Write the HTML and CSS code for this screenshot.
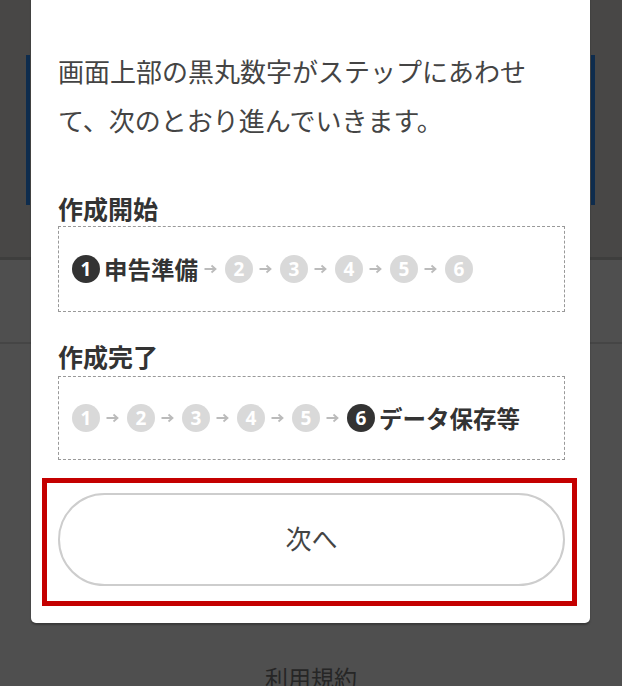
FILE: index.html
```html
<!DOCTYPE html>
<html lang="ja">
<head>
<meta charset="utf-8">
<title>作成の流れ</title>
<link rel="stylesheet" href="styles.css">
</head>
<body>
<div class="page">
  <header class="bg-top"><div class="navy-box"></div></header>
  <section class="bg-mid"></section>
  <footer class="bg-foot"><a class="terms">利用規約</a></footer>
</div>

<div class="modal" role="dialog">
  <p class="lead">画面上部の黒丸数字がステップにあわせて、次のとおり進んでいきます。</p>

  <h2 class="step-title">作成開始</h2>
  <div class="step-box">
    <ol class="steps">
      <li class="num on">1</li><li class="label">申告準備</li>
      <li class="arrow"><svg viewBox="0 0 13 10" width="13" height="10"><path d="M0.5 5H11.5M7.5 1.5L11.5 5L7.5 8.5" /></svg></li>
      <li class="num">2</li>
      <li class="arrow"><svg viewBox="0 0 13 10" width="13" height="10"><path d="M0.5 5H11.5M7.5 1.5L11.5 5L7.5 8.5" /></svg></li>
      <li class="num">3</li>
      <li class="arrow"><svg viewBox="0 0 13 10" width="13" height="10"><path d="M0.5 5H11.5M7.5 1.5L11.5 5L7.5 8.5" /></svg></li>
      <li class="num">4</li>
      <li class="arrow"><svg viewBox="0 0 13 10" width="13" height="10"><path d="M0.5 5H11.5M7.5 1.5L11.5 5L7.5 8.5" /></svg></li>
      <li class="num">5</li>
      <li class="arrow"><svg viewBox="0 0 13 10" width="13" height="10"><path d="M0.5 5H11.5M7.5 1.5L11.5 5L7.5 8.5" /></svg></li>
      <li class="num">6</li>
    </ol>
  </div>

  <h2 class="step-title second">作成完了</h2>
  <div class="step-box end">
    <ol class="steps">
      <li class="num">1</li>
      <li class="arrow"><svg viewBox="0 0 13 10" width="13" height="10"><path d="M0.5 5H11.5M7.5 1.5L11.5 5L7.5 8.5" /></svg></li>
      <li class="num">2</li>
      <li class="arrow"><svg viewBox="0 0 13 10" width="13" height="10"><path d="M0.5 5H11.5M7.5 1.5L11.5 5L7.5 8.5" /></svg></li>
      <li class="num">3</li>
      <li class="arrow"><svg viewBox="0 0 13 10" width="13" height="10"><path d="M0.5 5H11.5M7.5 1.5L11.5 5L7.5 8.5" /></svg></li>
      <li class="num">4</li>
      <li class="arrow"><svg viewBox="0 0 13 10" width="13" height="10"><path d="M0.5 5H11.5M7.5 1.5L11.5 5L7.5 8.5" /></svg></li>
      <li class="num">5</li>
      <li class="arrow"><svg viewBox="0 0 13 10" width="13" height="10"><path d="M0.5 5H11.5M7.5 1.5L11.5 5L7.5 8.5" /></svg></li>
      <li class="num on">6</li><li class="label">データ保存等</li>
    </ol>
  </div>

  <div class="highlight">
    <button class="next" type="button">次へ</button>
  </div>
</div>
</body>
</html>
```

FILE: styles.css
```css
html, body {
  margin: 0;
  padding: 0;
}
body {
  background: #4f4f4f;
  overflow: hidden;
  height: 686px;
  position: relative;
  font-family: "Noto Sans CJK JP", "Noto Sans", sans-serif;
}

.page {
  display: flex;
  flex-direction: column;
}
.bg-top {
  height: 260px;
  background: #484746;
  padding-top: 55px;
  box-sizing: border-box;
  border-bottom: 3px solid #3e3e3d;
}
.navy-box {
  height: 150px;
  margin: 0 27px 0 26px;
  border-left: 4px solid #0e2c4d;
  border-right: 4px solid #0e2c4d;
}
.bg-mid {
  height: 82px;
  border-bottom: 2px solid #454545;
}
.bg-foot {
  padding-top: 318px;
  text-align: center;
}
.terms {
  font-size: 23px;
  line-height: 30px;
  color: #262626;
  text-decoration: none;
}

.modal {
  position: absolute;
  top: -10px;
  left: 31px;
  width: 559px;
  box-sizing: border-box;
  padding: 56px 25px 17px 27px;
  background: #fff;
  border-radius: 5px;
  box-shadow: 0 2px 2px rgba(0, 0, 0, 0.28);
  color: #333;
}

.lead {
  margin: 0;
  font-size: 26px;
  line-height: 49px;
  color: #444;
}

.step-title {
  margin: 48px 0 2px;
  font-size: 25px;
  line-height: 32px;
  font-weight: 700;
  color: #333;
}
.step-title.second {
  margin-top: 28px;
  margin-bottom: 4px;
}

.step-box {
  height: 86px;
  box-sizing: border-box;
  border: 1px dashed #999;
  padding: 0 13px;
  display: flex;
  align-items: center;
}
.step-box.end {
  height: 84px;
}

.steps {
  list-style: none;
  margin: 0;
  padding: 0;
  display: flex;
  align-items: center;
}
.num {
  width: 28px;
  height: 28px;
  border-radius: 50%;
  background: #d9d9d9;
  color: #fff;
  font-family: "Open Sans", "Liberation Sans", sans-serif;
  font-weight: 700;
  font-size: 19px;
  line-height: 28px;
  text-align: center;
}
.num.on {
  background: #333;
}
.label {
  margin-left: 4px;
  font-size: 23.5px;
  line-height: 30px;
  font-weight: 700;
  color: #333;
}
.arrow {
  display: flex;
  margin: 0 8px 0 6px;
}
.arrow svg {
  fill: none;
  stroke: #bbb;
  stroke-width: 1.8;
}

.highlight {
  margin: 18px -12px 0 -16px;
  border: 5px solid #c40000;
  padding: 10px 7px 15px 11px;
}
.next {
  display: block;
  width: 100%;
  height: 93px;
  border: 2px solid #cdcdcd;
  border-radius: 47px;
  background: #fff;
  font-family: "Noto Sans CJK JP", "Noto Sans", sans-serif;
  font-size: 26px;
  line-height: 1;
  padding: 0 0 4px;
  color: #444;
  cursor: pointer;
}
```
